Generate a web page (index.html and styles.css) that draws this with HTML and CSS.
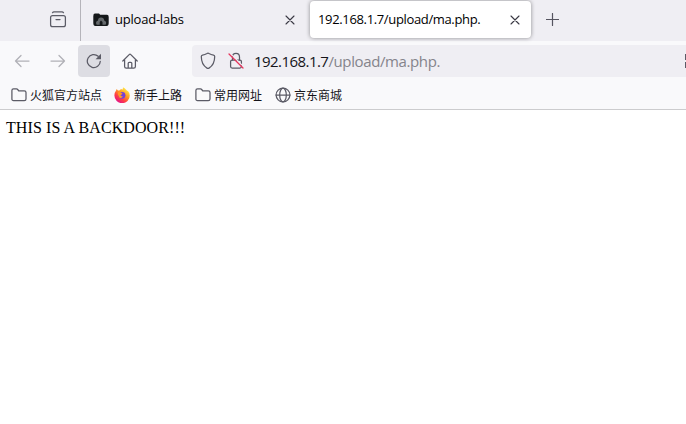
FILE: index.html
```html
<!DOCTYPE html>
<html lang="zh-CN">
<head>
<meta charset="utf-8">
<title>192.168.1.7/upload/ma.php.</title>
<link rel="stylesheet" href="styles.css">
</head>
<body>
<div class="tabbar">
  <div class="view">
    <svg width="18" height="18" viewBox="0 0 18 18"><path d="M3.500 1.700Q4 .8 5 .8h8q1 0 1.500.9"/><rect x="1.600" y="4.500" width="14.800" height="11.200" rx="2"/><path d="M7 8.500h4"/></svg>
  </div>
  <div class="tab">
    <svg class="favicon" width="16" height="14" viewBox="0 0 16 14"><path class="folder" d="M.3 3Q.3.6 2 .6h4l1.200 1.200H14Q15.700 1.800 15.700 4v6q0 3-2 3H2.300Q.3 13 .3 10z"/><path class="cloud" d="M3.600 11.700Q2 8.500 5 7.500q0-3 3-3t3.200 3q3 1 1.400 4.200H9.500V9L8 7.600 6.700 9v2.700z"/></svg>
    <span class="title">upload-labs</span>
    <svg class="close" width="10" height="10" viewBox="0 0 10 10"><path d="M1 1l8 8M9 1L1 9"/></svg>
  </div>
  <div class="tab active">
    <span class="title">192.168.1.7/upload/ma.php.</span>
    <svg class="close" width="10" height="10" viewBox="0 0 10 10"><path d="M1 1l8 8M9 1L1 9"/></svg>
  </div>
  <svg class="plus" width="13" height="13" viewBox="0 0 13 13"><path d="M6.500.5v12M.5 6.500h12"/></svg>
</div>
<div class="toolbar">
  <div class="button disabled"><svg width="16" height="16" viewBox="0 0 16 16"><path d="M15 8H1.500M7 2.500L1.500 8 7 13.500"/></svg></div>
  <div class="button disabled"><svg width="16" height="16" viewBox="0 0 16 16"><path d="M1 8h13.500M9 2.500L14.500 8 9 13.500"/></svg></div>
  <div class="button pressed"><svg width="16" height="16" viewBox="0 0 16 16"><path d="M14.300 8.300A6.500 6.500 0 1 1 12.200 3.300"/><path class="solid" d="M15 .8v5.400H9.600z"/></svg></div>
  <div class="button home"><svg width="16" height="16" viewBox="0 0 16 16"><path d="M.8 8L7.200 1.600q.8-.8 1.600 0L15.200 8M2.600 6.700v6.700q0 1.700 1.700 1.700h7.400q1.700 0 1.700-1.700V6.700M6.200 15V10.300q0-1 1-1h1.600q1 0 1 1V15"/></svg></div>
  <div class="urlbar">
    <svg class="shield" width="16" height="18" viewBox="0 0 16 18"><path d="M8 1.200q.5 0 1 .4 2 1.300 4.500 1.500 1.200.2 1.200 1.500 0 8.200-5.700 11.500-1 .6-2 0Q1.300 12.800 1.300 4.600q0-1.300 1.200-1.500Q5 2.900 7 1.600q.5-.4 1-.4z"/></svg>
    <svg class="lock" width="16" height="18" viewBox="0 0 16 18"><path d="M4.500 8V5Q4.500 1.400 8 1.400T11.500 5v3"/><rect x="2.600" y="8" width="10.800" height="8" rx="1.500"/><path class="gap" d="M2.200 1.300l14 14"/><path class="slash" d="M1 2l14 14"/></svg>
    <span class="url"><span class="host">192.168.1.7</span><span class="path">/upload/ma.php.</span></span>
    <svg class="qr" width="1" height="14" viewBox="0 0 1 14"><path class="solid" d="M0 0h1v6H0zM0 8h1v6H0z"/></svg>
  </div>
</div>
<div class="bookmarks">
  <div class="bookmark"><svg width="16" height="16" viewBox="0 0 16 16"><path d="M.9 11.900V3.500q0-1.600 1.600-1.600h3q.7 0 1.200.6l1 1.300h5.600q1.700 0 1.700 1.700v6.400q0 1.700-1.700 1.700H2.600Q.9 13.600.9 11.900z"/></svg><span>火狐官方站点</span></div>
  <div class="bookmark"><svg width="16" height="16" viewBox="0 0 16 16"><defs><linearGradient id="fire" x1=".85" y1=".1" x2=".25" y2=".95"><stop offset="0" stop-color="#fff44f"/><stop offset=".4" stop-color="#ff9a20"/><stop offset=".72" stop-color="#ff3b47"/><stop offset="1" stop-color="#e31587"/></linearGradient></defs><path class="fox" d="M2.200 3.200l.4-1.300L4 3.500l1.300.1Q6.400 1.800 8 2l-.3 1Q9.300 2 8.900.2q2 .7 3 2.300.9.600 1.300 1.500l.6-.2Q15.800 6 15.800 8.500A7.600 7.600 0 0 1 .4 8.500Q.4 5.500 2.200 3.200z"/><circle class="globe" cx="8" cy="8.300" r="3.400"/><path class="tail" d="M3.700 5.400Q6 4.300 7.500 6l1 .6q-.3 1.200-2 1.300.4 1.600 2.400 1.200Q8 11.600 5.500 10.800 3.800 8.500 3.700 5.400z"/></svg><span>新手上路</span></div>
  <div class="bookmark"><svg width="16" height="16" viewBox="0 0 16 16"><path d="M.9 11.900V3.500q0-1.600 1.600-1.600h3q.7 0 1.200.6l1 1.300h5.600q1.700 0 1.700 1.700v6.400q0 1.700-1.700 1.700H2.600Q.9 13.600.9 11.900z"/></svg><span>常用网址</span></div>
  <div class="bookmark"><svg width="16" height="16" viewBox="0 0 16 16"><circle cx="8" cy="8" r="6.900"/><ellipse cx="8" cy="8" rx="3.300" ry="6.900"/><path d="M1 8h14"/></svg><span>京东商城</span></div>
</div>
<main class="page">THIS IS A BACKDOOR!!!</main>
</body>
</html>
```

FILE: styles.css
```css
* { box-sizing: border-box; }
body { margin: 0; height: 424px; overflow: hidden; background: #fff; font-family: "Open Sans", "Noto Sans CJK SC", sans-serif; color: #15141a; }
svg { display: block; flex: none; fill: none; stroke: #5b5b66; stroke-width: 1.25; stroke-linecap: round; stroke-linejoin: round; }
.solid { fill: #5b5b66; stroke: none; }
.tabbar { display: flex; height: 41px; background: #efeef3; }
.view { width: 81px; padding: 11px 0 0 49px; border-right: 1px solid #b5b4ba; }
.tab { display: flex; align-items: center; width: 222px; height: 37px; margin: 1px 4px 0 3px; padding: 0 11px 0 9px; font-size: 13px; white-space: nowrap; }
.tab.active { width: 221px; margin: 1px 0 0; padding-left: 8px; background: #fff; border-radius: 4px; box-shadow: 0 0 4px rgba(0,0,0,.42); }
.favicon { margin: 1px 6px 0 0; stroke: none; }
.folder { fill: #15181a; }
.cloud { fill: #65696c; }
.title { flex: 1; padding-bottom: 1px; letter-spacing: -.22px; color: #000; }
.active .title { letter-spacing: -.35px; }
.close { stroke: #3a3944; stroke-width: 1.1; }
.plus { margin: 13px 0 0 15px; stroke-width: 1.2; stroke: #55545f; }
.toolbar { display: flex; gap: 4px; height: 40px; padding: 4px 0 4px 6px; background: #f9f9fb; }
.button { display: flex; align-items: center; justify-content: center; width: 32px; height: 32px; border-radius: 4px; }
.disabled { opacity: .45; }
.pressed { background: #dddde3; }
.home { padding-right: 1px; }
.urlbar { display: flex; flex: 1; align-items: center; margin-left: 42px; padding-left: 8px; background: #efeef3; border-radius: 4px 0 0 4px; }
.lock { margin-left: 12px; }
.gap { stroke: #efeef3; stroke-width: 1.2; }
.slash { stroke: #e7345c; }
.url { flex: 1; margin-left: 10px; padding-bottom: 1px; font-size: 15px; line-height: 20px; white-space: nowrap; }
.host { letter-spacing: -.55px; }
.path { letter-spacing: -.38px; color: #85848b; }
.bookmarks { display: flex; height: 29px; padding-left: 11px; gap: 13px; background: #f9f9fb; border-bottom: 1px solid #ccccce; }
.bookmark { display: flex; align-items: center; gap: 3px; height: 28px; font: 12px/18px "Noto Sans CJK SC", sans-serif; white-space: nowrap; }
.bookmark:nth-child(2) svg { margin: 0 1px 0 -1px; }
.page { padding: 9px 6px; font: 16px/18px "Liberation Serif", serif; letter-spacing: .09px; color: #000; }
.fox { fill: url(#fire); stroke: none; }
.globe { fill: #7540d8; stroke: none; }
.tail { fill: #ff9b22; stroke: none; }
```
